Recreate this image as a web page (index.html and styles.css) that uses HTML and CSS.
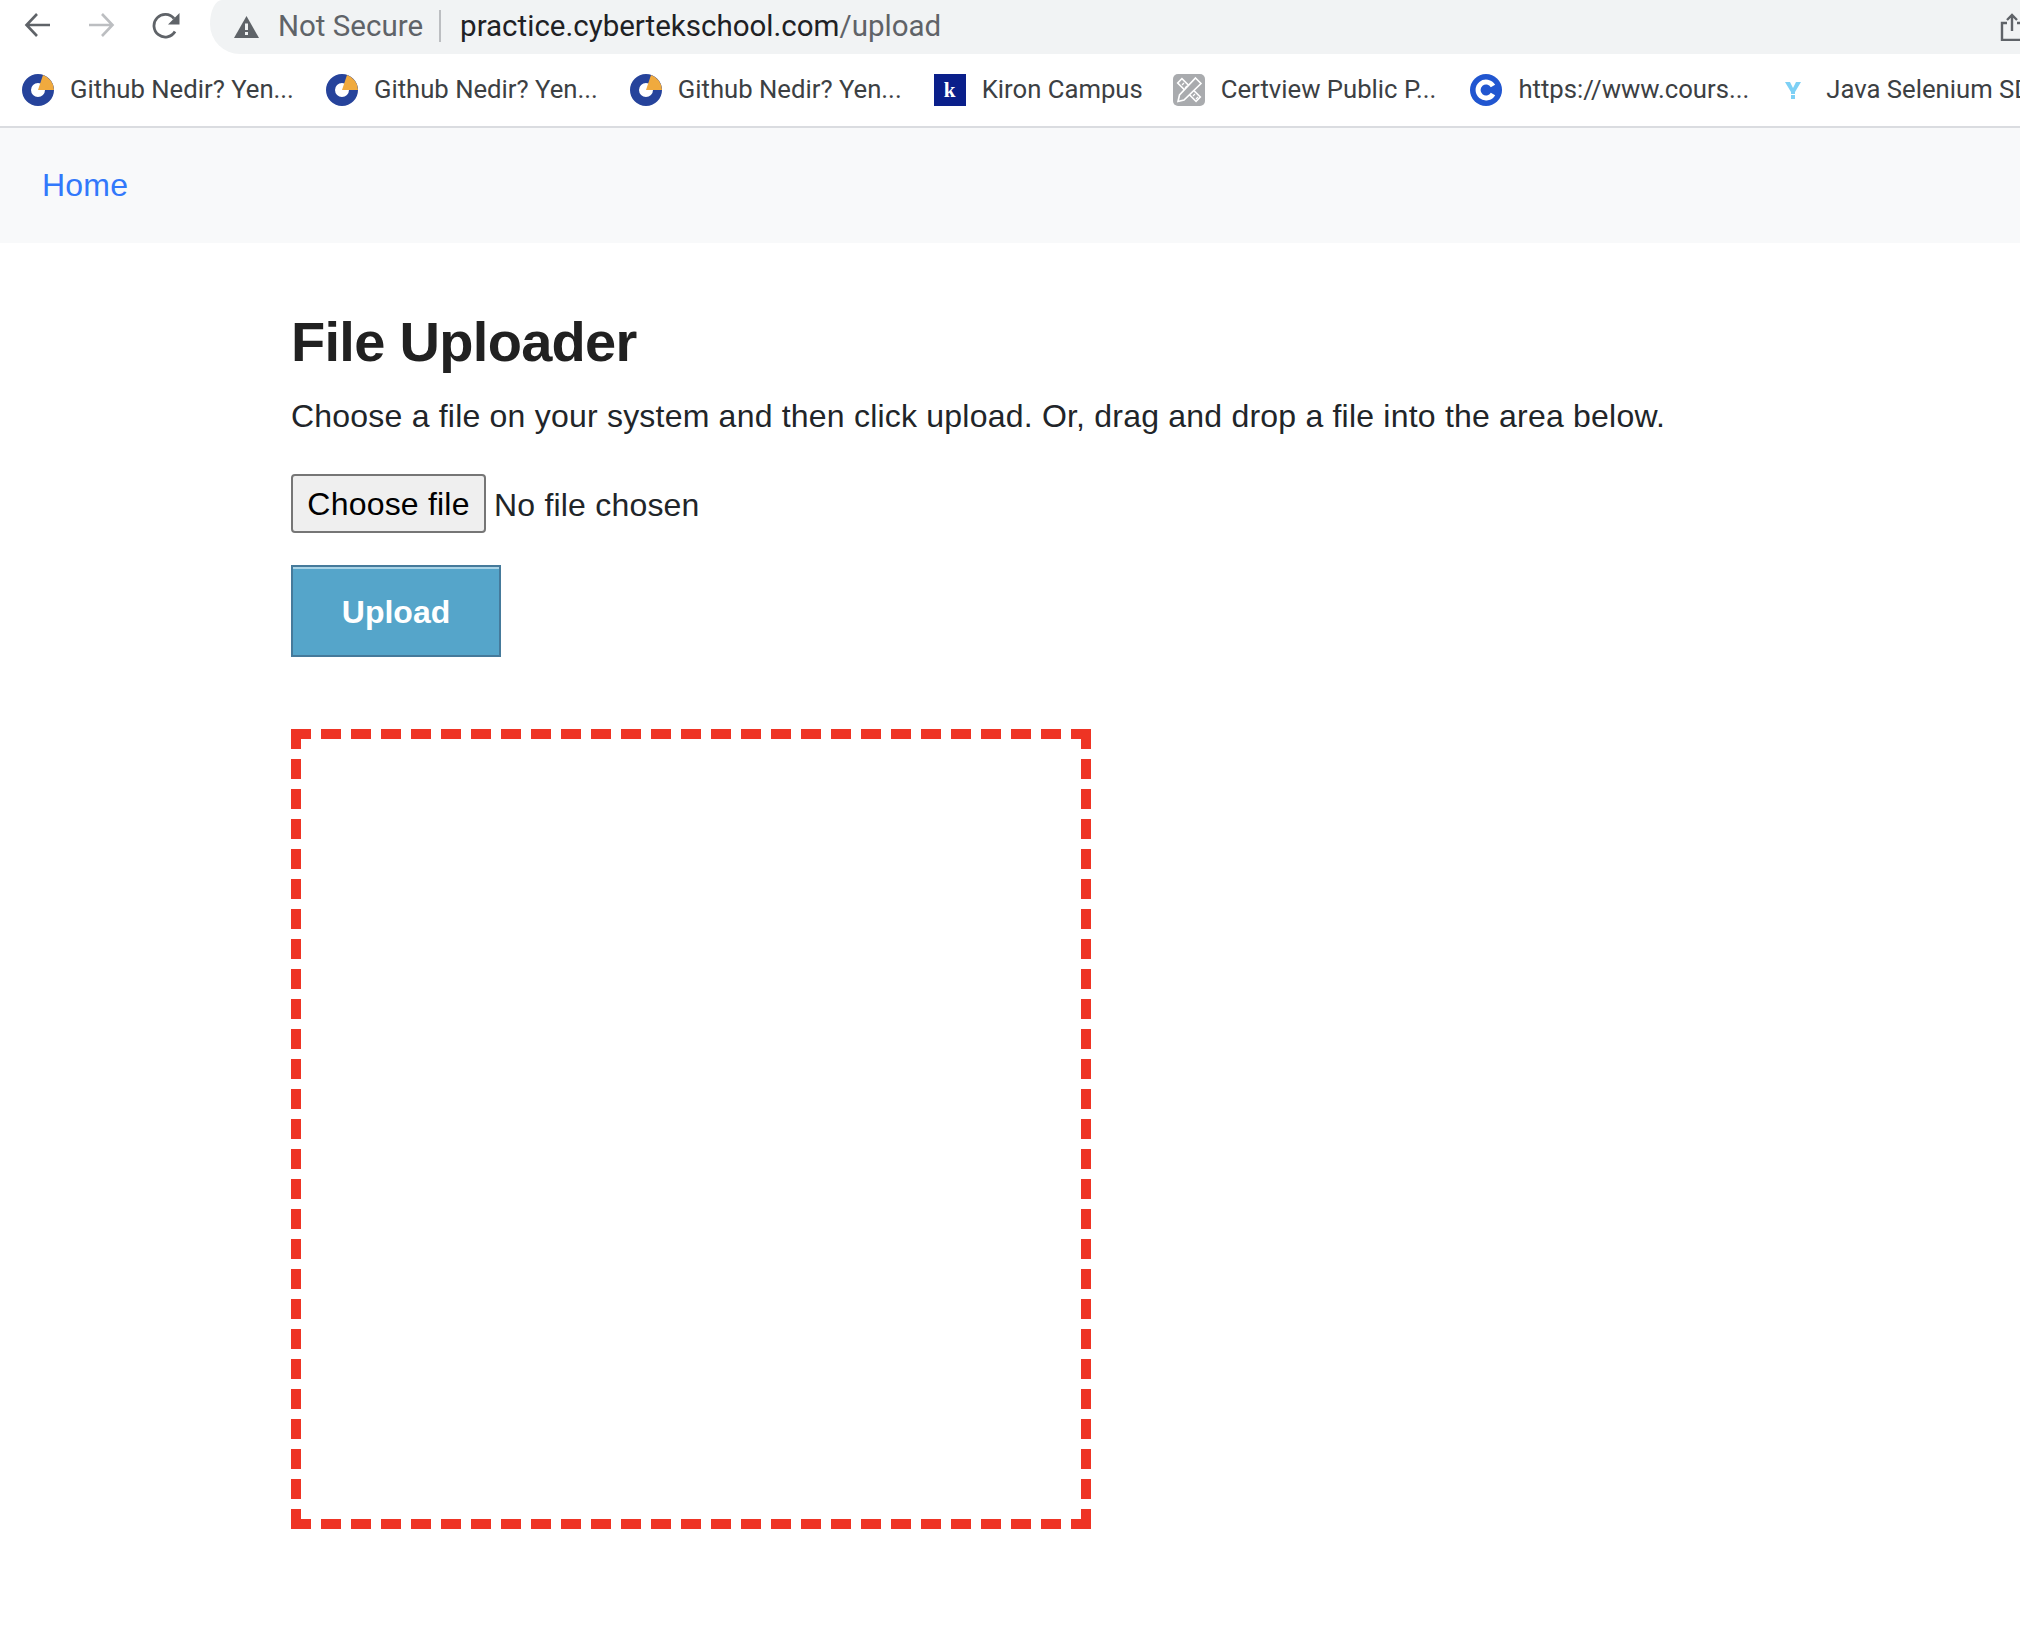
FILE: index.html
```html
<!DOCTYPE html>
<html lang="en">
<head>
  <meta charset="UTF-8" />
  <title>File Uploader</title>
  <link rel="stylesheet" href="styles.css">
</head>
<body>

  <!-- Browser toolbar -->
  <div class="toolbar">
    <div class="nav-icons">
      <svg class="nav-icon" viewBox="0 0 28 26"><path d="M26 12H3M13 1 2.500 12 13 23" fill="none" stroke="#5f6368" stroke-width="2.600"/></svg>
      <svg class="nav-icon" viewBox="0 0 28 26"><path d="M1 12h23M14 1l10.500 11L14 23" fill="none" stroke="#bcbec1" stroke-width="2.600"/></svg>
      <svg class="nav-icon" viewBox="0 0 28 26"><path d="M23 18.500A11.300 11.300 0 1 1 22 5.500" fill="none" stroke="#5f6368" stroke-width="2.800"/><path d="M27.500 0v11.500H16z" fill="#5f6368"/></svg>
    </div>
    <div class="omnibox">
      <svg class="warn" viewBox="0 0 25 22"><path d="M12.500 0 25 22H0z" fill="#5f6368"/><path d="M11 7.500h3v6.500h-3zM11 16h3v3h-3z" fill="#f1f3f4"/></svg>
      <span class="not-secure">Not Secure</span>
      <span class="url"><span class="url-host">practice.cybertekschool.com</span>/upload</span>
      <svg class="share" viewBox="0 0 24 28"><path d="M7 10H2v17h20V10h-5M12 18V2M7 7l5-5 5 5" fill="none" stroke="#5f6368" stroke-width="2.400"/></svg>
    </div>
  </div>

  <!-- Bookmarks -->
  <div class="bookmarks">
    <a class="bm">
      <svg class="bm-icon" viewBox="0 0 32 32"><circle cx="16" cy="16" r="11.500" fill="none" stroke="#26439b" stroke-width="9"/><path d="M16 16h16A16 16 0 0 0 21 1z" fill="#f0aa3e"/></svg>
      <span class="bm-label">Github Nedir? Yen...</span>
    </a>
    <a class="bm">
      <svg class="bm-icon" viewBox="0 0 32 32"><circle cx="16" cy="16" r="11.500" fill="none" stroke="#26439b" stroke-width="9"/><path d="M16 16h16A16 16 0 0 0 21 1z" fill="#f0aa3e"/></svg>
      <span class="bm-label">Github Nedir? Yen...</span>
    </a>
    <a class="bm">
      <svg class="bm-icon" viewBox="0 0 32 32"><circle cx="16" cy="16" r="11.500" fill="none" stroke="#26439b" stroke-width="9"/><path d="M16 16h16A16 16 0 0 0 21 1z" fill="#f0aa3e"/></svg>
      <span class="bm-label">Github Nedir? Yen...</span>
    </a>
    <a class="bm bm-kiron">
      <span class="kiron-icon">k</span>
      <span class="bm-label">Kiron Campus</span>
    </a>
    <a class="bm bm-certview">
      <svg class="bm-icon" viewBox="0 0 32 32">
        <rect width="32" height="32" rx="5" fill="#a9abae"/>
        <g fill="none" stroke="#fff" stroke-width="1.600">
          <rect x="13" y="3" width="6" height="26" transform="rotate(-45 16 16)"/>
          <path d="M22.500 4l5.500 5.500L11 26l-6 1.500L6.500 21z" fill="#a9abae"/>
          <path d="M9 11l2-2M12 14l2-2M20 22l2-2M23 25l2-2" stroke-width="1.200"/>
        </g>
      </svg>
      <span class="bm-label">Certview Public P...</span>
    </a>
    <a class="bm bm-coursera">
      <svg class="bm-icon" viewBox="0 0 32 32"><circle cx="16" cy="16" r="16" fill="#2156d0"/><path d="M23 12a8 8 0 1 0 0 8" fill="none" stroke="#fff" stroke-width="5"/></svg>
      <span class="bm-label">https://www.cours...</span>
    </a>
    <a class="bm">
      <svg class="bm-icon-y" viewBox="0 0 18 32"><path d="M1 8h5l3 6 3-6h5l-6 10v2H7v-2z" fill="#7dd0f5"/><rect x="7" y="21" width="4" height="4" fill="#7dd0f5"/></svg>
      <span class="bm-label">Java Selenium SDET</span>
    </a>
  </div>

  <nav class="navbar">
    <a class="home-link" href="#">Home</a>
  </nav>

  <div class="content">
    <h1>File Uploader</h1>
    <p class="intro">Choose a file on your system and then click upload. Or, drag and drop a file into the area below.</p>

    <div class="file-row">
      <button class="choose-btn">Choose file</button>
      <span class="no-file">No file chosen</span>
    </div>

    <button class="upload-btn">Upload</button>

    <div class="drop-area"></div>
  </div>

</body>
</html>
```

FILE: styles.css
```css
body {
  margin: 0;
  background: #fff;
  color: #212529;
  font-family: "Liberation Sans", Arial, sans-serif;
  overflow: hidden;
}

/* Browser toolbar */
.toolbar {
  display: flex;
  height: 54px;
}
.nav-icons {
  display: flex;
  align-items: center;
  gap: 36px;
  width: 210px;
  padding: 0 0 2px 24px;
  box-sizing: border-box;
}
.nav-icon {
  width: 28px;
  height: 26px;
  flex: none;
}
.omnibox {
  flex: 1;
  display: flex;
  align-items: center;
  background: #f1f3f4;
  border-radius: 12px 0 0 30px / 24px 0 0 30px;
  padding-left: 24px;
  font-size: 29.500px;
  font-family: Roboto, sans-serif;
}
.warn {
  width: 25px;
  height: 22px;
  margin-right: 19px;
}
.not-secure {
  color: #5f6368;
  padding-right: 16px;
  border-right: 2px solid #bcbec1;
  line-height: 32px;
  margin-bottom: 2px;
}
.url {
  margin-left: 19px;
  margin-bottom: 2px;
  color: #5f6368;
}
.url-host {
  color: #202124;
}
.share {
  width: 24px;
  height: 28px;
  margin-left: auto;
  margin-right: -4px;
  flex: none;
}

/* Bookmarks */
.bookmarks {
  display: flex;
  height: 74px;
  align-items: center;
  padding-left: 22px;
  border-bottom: 2px solid #dadce0;
  box-sizing: border-box;
  white-space: nowrap;
  font-family: Roboto, sans-serif;
  font-size: 25.700px;
  color: #3c4043;
  overflow: hidden;
}
.bm {
  display: flex;
  align-items: center;
  gap: 16px;
  flex: none;
  margin-right: 32px;
}
.bm-kiron {
  margin-right: 30px;
}
.bm-certview {
  margin-right: 34px;
}
.bm-coursera {
  margin-right: 35px;
}
.bm-label {
  margin-bottom: 2px;
}
.bm-icon, .kiron-icon {
  width: 32px;
  height: 32px;
  flex: none;
}
.bm-icon-y {
  width: 18px;
  height: 32px;
  flex: none;
  margin-right: 8px;
}
.kiron-icon {
  background: #0a1f8a;
  color: #fff;
  font-family: "Liberation Serif", serif;
  font-weight: bold;
  font-size: 21px;
  display: flex;
  align-items: center;
  justify-content: center;
}

.navbar {
  background: #f8f9fa;
  height: 115px;
  display: flex;
  align-items: center;
  padding-left: 42px;
  box-sizing: border-box;
}
.home-link {
  color: #3278fb;
  font-size: 32px;
  letter-spacing: 0.200px;
  text-decoration: none;
}

.content {
  padding: 64px 0 0 291px;
}
h1 {
  margin: 0;
  color: #212121;
  font-size: 56px;
  font-weight: bold;
  letter-spacing: -0.700px;
  line-height: 70px;
}
.intro {
  margin: 15px 0 0;
  font-size: 32px;
  letter-spacing: 0.210px;
  line-height: 48px;
}
.file-row {
  display: flex;
  align-items: center;
  gap: 8px;
  margin-top: 34px;
}
.choose-btn {
  width: 195px;
  height: 59px;
  padding: 2px 0 0;
  background: #efefef;
  border: 2px solid #767676;
  border-radius: 4px;
  color: #000;
  font-family: inherit;
  font-size: 32px;
  letter-spacing: 0.200px;
}
.no-file {
  font-size: 32px;
  letter-spacing: 0.200px;
  padding-top: 3px;
}
.upload-btn {
  display: block;
  width: 210px;
  height: 92px;
  padding: 3px 0 0;
  margin-top: 32px;
  background: #55a5ca;
  border: 2px solid #457a9b;
  box-shadow: inset 0 2px 0 #a9d3e6;
  color: #fff;
  font-family: inherit;
  font-size: 32px;
  font-weight: bold;
}
.drop-area {
  width: 800px;
  height: 800px;
  box-sizing: border-box;
  margin-top: 72px;
  border: 10px dashed #ee3424;
}
```
